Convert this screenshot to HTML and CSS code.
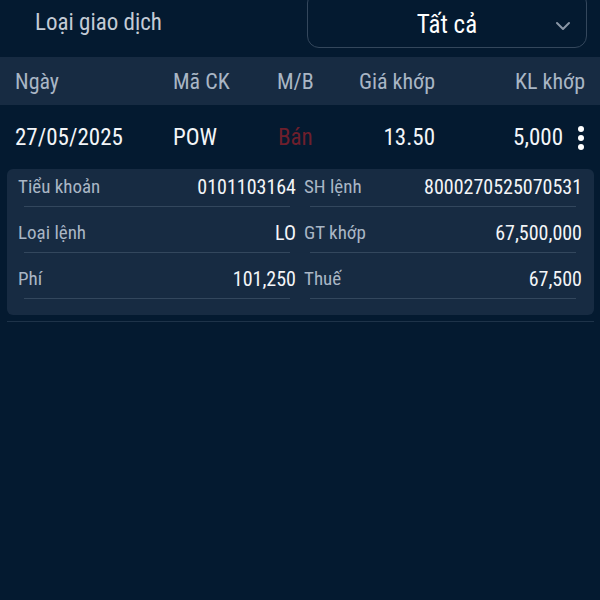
FILE: index.html
```html
<!DOCTYPE html>
<html lang="vi">
<head>
    <meta charset="UTF-8">
    <meta name="viewport" content="width=device-width, initial-scale=1.0">
    <title>Lịch sử khớp lệnh</title>
    <link rel="stylesheet" href="styles.css">
</head>
<body>
    <div class="screen">
        <!-- Filter -->
        <div class="filter-bar">
            <div class="filter-label">Loại giao dịch</div>
            <div class="select-box">
                <span class="select-value">Tất cả</span>
                <svg class="chevron" width="16" height="10" viewBox="0 0 16 10">
                    <path d="M2 2l6 6 6-6" fill="none" stroke="#8a96a6" stroke-width="2" stroke-linecap="round" stroke-linejoin="round"/>
                </svg>
            </div>
        </div>

        <!-- Table header -->
        <div class="table-row table-head">
            <div>Ngày</div>
            <div>Mã CK</div>
            <div>M/B</div>
            <div class="num">Giá khớp</div>
            <div class="num">KL khớp</div>
        </div>

        <!-- Order row -->
        <div class="table-row order-row">
            <div>27/05/2025</div>
            <div>POW</div>
            <div class="sell">Bán</div>
            <div class="num">13.50</div>
            <div class="num qty">
                <span>5,000</span>
                <span class="more">
                    <i></i><i></i><i></i>
                </span>
            </div>
        </div>

        <!-- Order detail -->
        <div class="detail-card">
            <div class="field">
                <div class="field-row"><span class="label">Tiểu khoản</span><span class="value">0101103164</span></div>
                <div class="field-line"></div>
            </div>
            <div class="field">
                <div class="field-row"><span class="label">SH lệnh</span><span class="value">8000270525070531</span></div>
                <div class="field-line"></div>
            </div>
            <div class="field">
                <div class="field-row"><span class="label">Loại lệnh</span><span class="value">LO</span></div>
                <div class="field-line"></div>
            </div>
            <div class="field">
                <div class="field-row"><span class="label">GT khớp</span><span class="value">67,500,000</span></div>
                <div class="field-line"></div>
            </div>
            <div class="field">
                <div class="field-row"><span class="label">Phí</span><span class="value">101,250</span></div>
                <div class="field-line"></div>
            </div>
            <div class="field">
                <div class="field-row"><span class="label">Thuế</span><span class="value">67,500</span></div>
                <div class="field-line"></div>
            </div>
        </div>
        <div class="row-divider"></div>
    </div>
</body>
</html>
```

FILE: styles.css
```css
* {
    margin: 0;
    padding: 0;
    box-sizing: border-box;
}
:root {
    --bg: #041a30;
    --panel: #172b42;
    --text: #f3f5f8;
    --muted: #a9b6c5;
    --line: #33475d;
    --sell: #6e1f2c;
}
body {
    font-family: "Roboto Condensed", Roboto, "Liberation Sans", sans-serif;
    font-stretch: 75%;
    background: var(--bg);
    color: var(--text);
    width: 600px;
    height: 600px;
    overflow: hidden;
}
.screen {
    display: flex;
    flex-direction: column;
}
/* Filter */
.filter-bar {
    height: 57px;
    display: flex;
    align-items: flex-start;
    justify-content: space-between;
    padding: 0 13px 0 35px;
}
.filter-label {
    font-size: 23px;
    line-height: 26px;
    margin-top: 10px;
    color: #c3cbd5;
}
.select-box {
    width: 280px;
    height: 57px;
    margin-top: -9px;
    border: 1px solid #34475c;
    border-radius: 12px;
    display: flex;
    align-items: center;
    justify-content: center;
    padding-top: 9px;
    position: relative;
}
.select-value {
    font-size: 25px;
    color: #fff;
}
.chevron {
    position: absolute;
    right: 15px;
    top: 29px;
}
/* Table */
.table-row {
    display: grid;
    grid-template-columns: 158px 104px 70px 88px 1fr;
    align-items: center;
    padding: 0 15px;
    font-size: 22px;
}
.table-row .num {
    text-align: right;
}
.table-head {
    height: 48px;
    background: var(--panel);
    color: var(--muted);
}
.table-head .num:first-of-type {
    margin-right: 0;
}
.order-row {
    height: 64px;
    font-size: 23px;
}
.sell {
    color: var(--sell);
    padding-left: 1px;
}
.qty {
    display: flex;
    align-items: center;
    justify-content: flex-end;
    gap: 15px;
    margin-right: 1px;
}
.more {
    display: flex;
    flex-direction: column;
    gap: 3px;
    padding-top: 2px;
}
.more i {
    display: block;
    width: 6px;
    height: 6px;
    border-radius: 50%;
    background: #fff;
}
/* Detail card */
.detail-card {
    margin: 0 6px 0 7px;
    background: var(--panel);
    border-radius: 6px;
    padding: 6px 12px 2px 11px;
    display: grid;
    grid-template-columns: 1fr 1fr;
    column-gap: 8px;
}
.field {
    padding-bottom: 14px;
}
.field-row {
    height: 24px;
    display: flex;
    justify-content: space-between;
    align-items: center;
    font-size: 19px;
    line-height: 24px;
}
.label {
    color: var(--muted);
}
.value {
    color: var(--text);
    font-size: 20px;
}
.field-line {
    height: 1px;
    margin: 7px 6px 0;
    background: var(--line);
}
.row-divider {
    height: 1px;
    margin: 6px 6px 0 7px;
    background: #1e3349;
}
```
